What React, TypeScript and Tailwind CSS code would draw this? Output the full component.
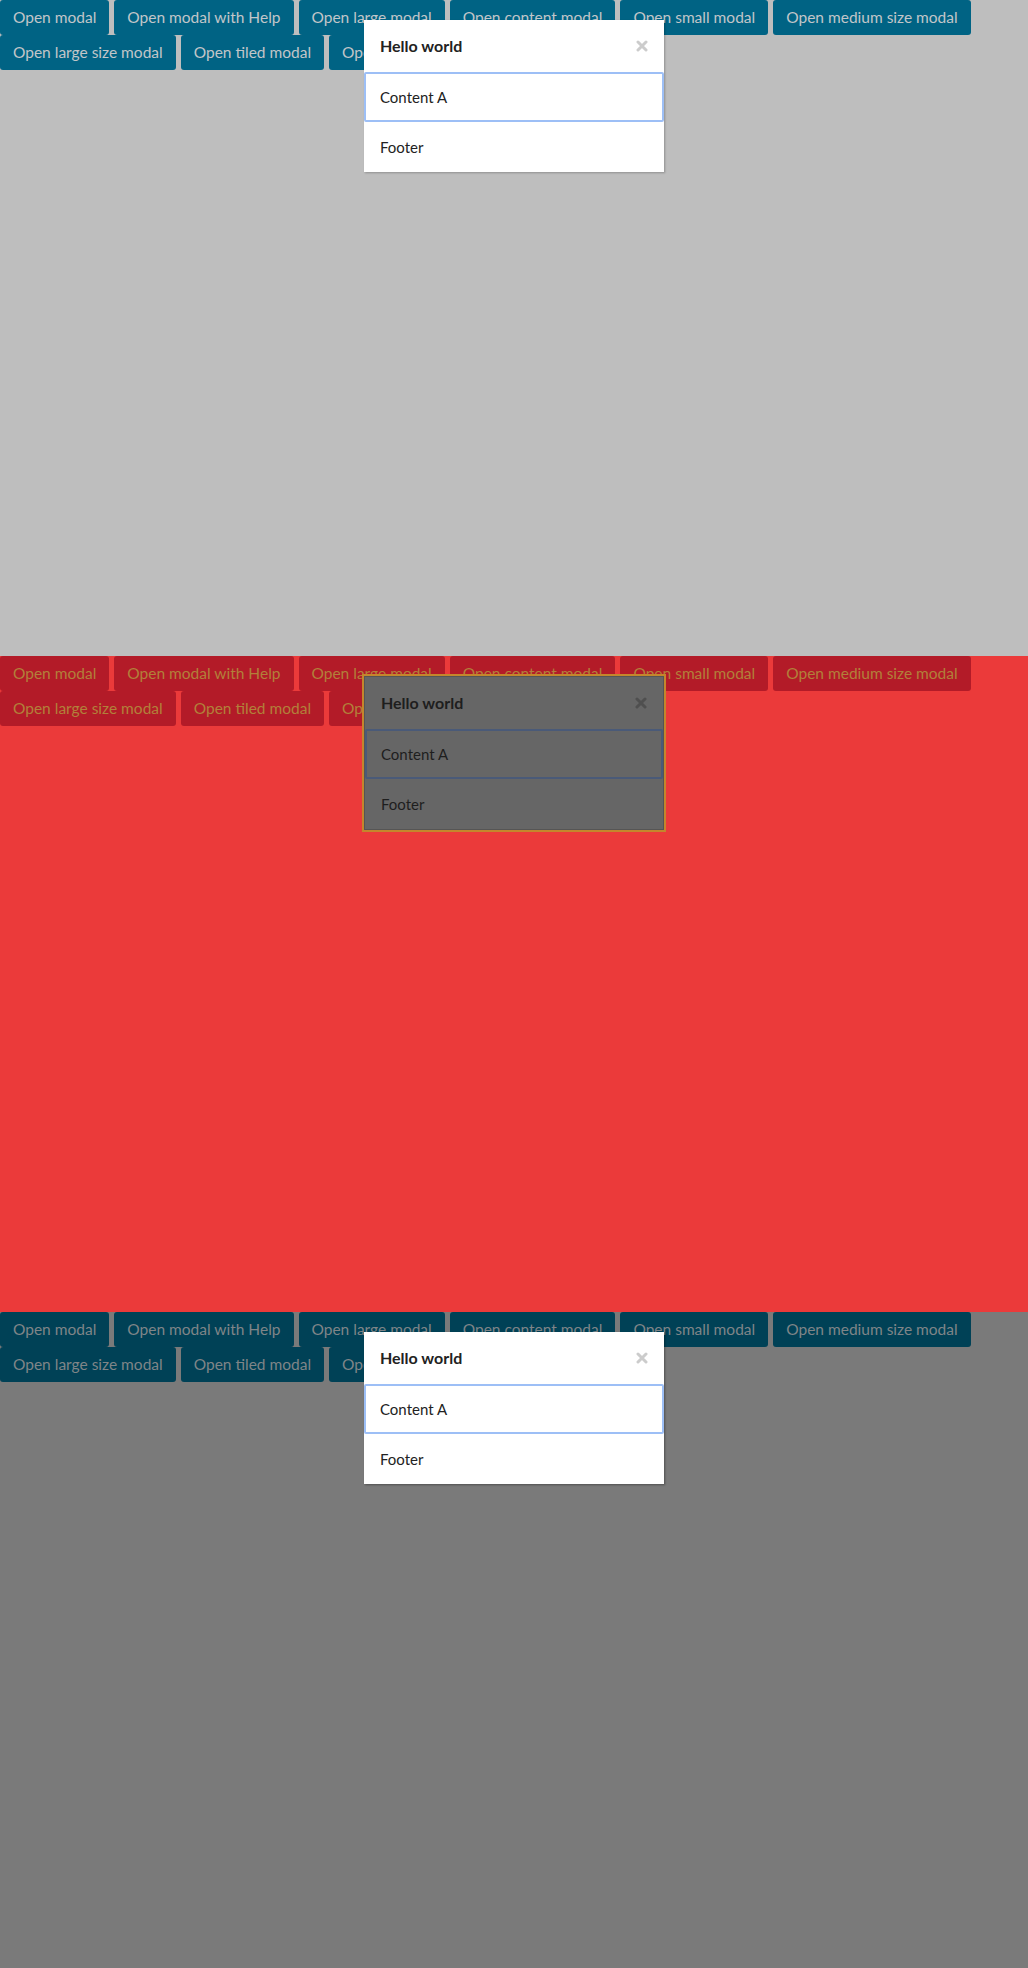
import React from "react";

const labels1 = [
  "Open modal",
  "Open modal with Help",
  "Open large modal",
  "Open content modal",
  "Open small modal",
  "Open medium size modal",
  "Open large size modal",
  "Open tiled modal",
  "Open nested modal",
];

type Theme = {
  bg: string;
  btn: string;
  btnText: string;
  modal: string;
  headText: string;
  bodyText: string;
  close: string;
  focus: string;
};

const themes: Theme[] = [
  {
    bg: "bg-[#bebebe]",
    btn: "bg-[#006384]",
    btnText: "text-[#c2c6c9]",
    modal: "bg-white shadow-[1px_1px_2px_rgba(0,0,0,0.25)]",
    headText: "text-[#222222]",
    bodyText: "text-[#222222]",
    close: "#cccccc",
    focus: "border-[#9dbff6]",
  },
  {
    bg: "bg-[#eb3a3a]",
    btn: "bg-[#b31b28]",
    btnText: "text-[#b2803a]",
    modal: "bg-[#666666] border border-[#555555] outline-2 outline-[#c4862c]",
    headText: "text-[#1e1e1e]",
    bodyText: "text-[#1e1e1e]",
    close: "#4f4f4f",
    focus: "border-[#4a5a78]",
  },
  {
    bg: "bg-[#7a7a7a]",
    btn: "bg-[#004156]",
    btnText: "text-[#7f8588]",
    modal: "bg-white shadow-[1px_1px_2px_rgba(0,0,0,0.35)]",
    headText: "text-[#222222]",
    bodyText: "text-[#222222]",
    close: "#cccccc",
    focus: "border-[#9dbff6]",
  },
];

function CloseIcon({ color }: { color: string }) {
  return (
    <svg width="12" height="12" viewBox="0 0 12 12">
      <path
        d="M2 2 L10 10 M10 2 L2 10"
        stroke={color}
        strokeWidth="3"
        strokeLinecap="round"
      />
    </svg>
  );
}

function Section({ t }: { t: Theme }) {
  return (
    <div className={`relative h-[656px] w-full ${t.bg}`}>
      <div className="flex flex-wrap gap-x-[5px] w-[1028px]">
        {labels1.map((l) => (
          <div
            key={l}
            className={`h-[35px] px-[13px] flex items-center rounded-[3px] ${t.btn} ${t.btnText} text-[15.5px] leading-none`}
          >
            {l}
          </div>
        ))}
      </div>
      <div className={`absolute left-[364px] top-[20px] w-[300px] ${t.modal}`}>
        <div className="h-[52px] flex items-center justify-between pl-[16px] pr-[16px]">
          <span className={`font-bold text-[16px] ${t.headText}`}>Hello world</span>
          <CloseIcon color={t.close} />
        </div>
        <div
          className={`h-[50px] flex items-center px-[14px] border-2 rounded-[2px] ${t.focus} ${t.bodyText} text-[15px]`}
        >
          Content A
        </div>
        <div className={`h-[50px] flex items-center px-[16px] text-[15px] ${t.bodyText}`}>
          Footer
        </div>
      </div>
    </div>
  );
}

export default function App() {
  return (
    <div className="w-[1028px] h-[1968px] overflow-hidden font-['Lato',sans-serif]">
      {themes.map((t, i) => (
        <Section key={i} t={t} />
      ))}
    </div>
  );
}
